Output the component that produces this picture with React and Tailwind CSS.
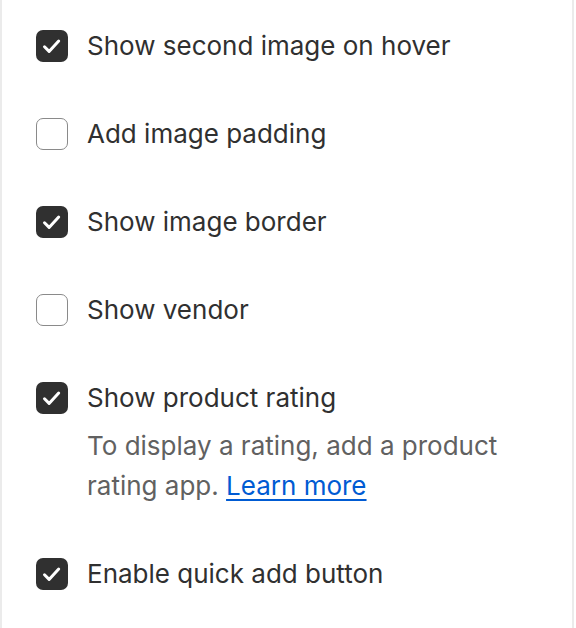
import { useState } from "react";

const initial = [
  { id: "hover", label: "Show second image on hover", checked: true },
  { id: "padding", label: "Add image padding", checked: false },
  { id: "border", label: "Show image border", checked: true },
  { id: "vendor", label: "Show vendor", checked: false },
  {
    id: "rating",
    label: "Show product rating",
    checked: true,
    help: true,
  },
  { id: "quick", label: "Enable quick add button", checked: true },
];

function Checkbox({ checked, onChange }) {
  return (
    <button
      type="button"
      onClick={onChange}
      className={
        checked
          ? "w-8 h-8 shrink-0 rounded-[7px] bg-[#303030] flex items-center justify-center"
          : "w-8 h-8 shrink-0 rounded-[7px] border-[1.5px] border-[#8a8a8a] bg-white"
      }
    >
      {checked && (
        <svg width="32" height="32" viewBox="0 0 32 32" fill="none">
          <path
            d="M8.5 16.8l4.6 4.6 9.6-10.4"
            stroke="#fff"
            strokeWidth="3"
            strokeLinecap="round"
            strokeLinejoin="round"
          />
        </svg>
      )}
    </button>
  );
}

export default function App() {
  const [items, setItems] = useState(initial);

  const toggle = (id) =>
    setItems(items.map((it) => (it.id === id ? { ...it, checked: !it.checked } : it)));

  return (
    <div
      className="w-[576px] h-[628px] bg-white flex overflow-hidden"
      style={{ fontFamily: "Inter, 'Noto Sans', sans-serif" }}
    >
      <div className="w-[2px] bg-[#ebebeb] shrink-0"></div>
      <div className="flex-1 flex flex-col gap-12 pt-[26px] pl-[34px]">
        {items.map((it) => (
          <div key={it.id} className="flex gap-[19px]">
            <div className="h-10 flex items-center">
              <Checkbox checked={it.checked} onChange={() => toggle(it.id)} />
            </div>
            <div className="flex flex-col">
              <span className="text-[26px] leading-10 text-[#303030]">{it.label}</span>
              {it.help && (
                <span className="mt-2 text-[26px] leading-10 text-[#616161] w-[420px]">
                  To display a rating, add a product rating app.{" "}
                  <a href="#" className="text-[#005bd3] underline underline-offset-4">
                    Learn more
                  </a>
                </span>
              )}
            </div>
          </div>
        ))}
      </div>
      <div className="w-[2px] bg-[#ebebeb] shrink-0"></div>
      <div className="w-[2px] bg-white shrink-0"></div>
    </div>
  );
}
